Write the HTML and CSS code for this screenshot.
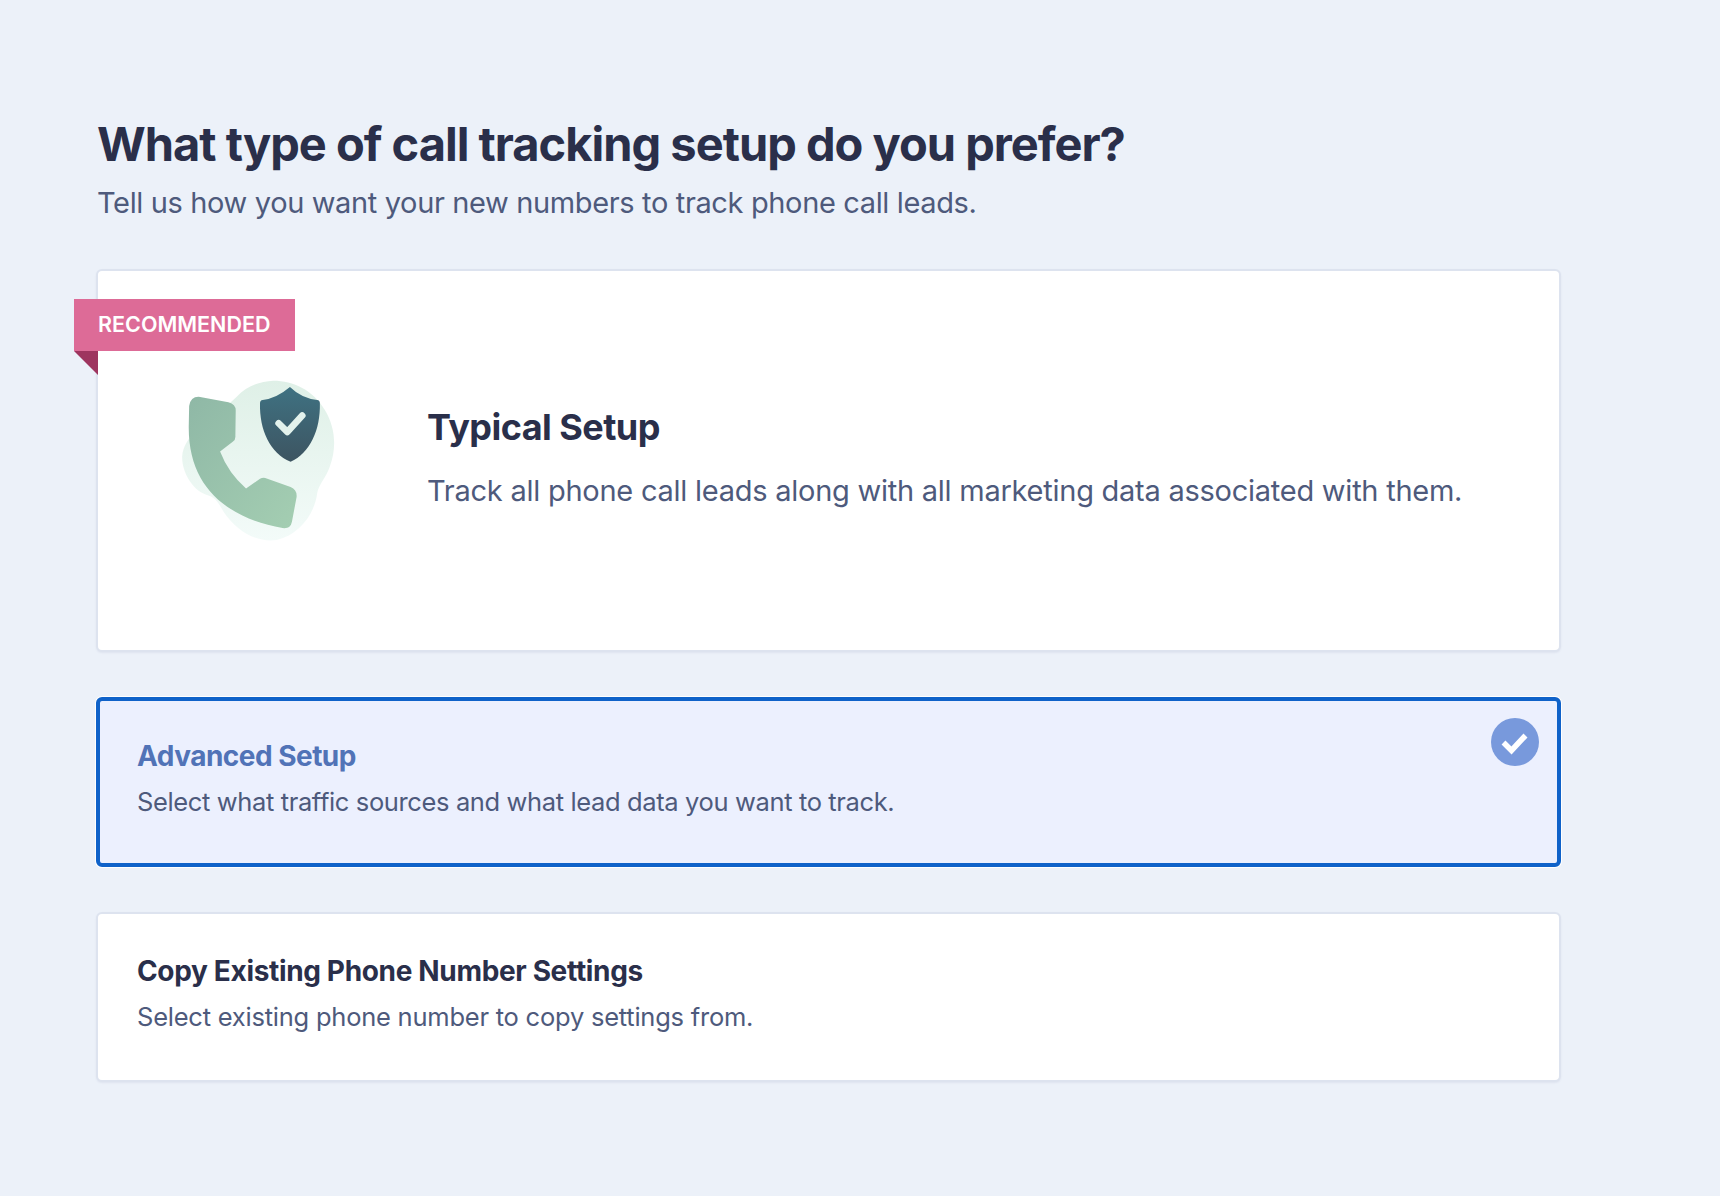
FILE: index.html
```html
<!DOCTYPE html>
<html lang="en">
<head>
<meta charset="utf-8">
<title>Call tracking setup</title>
<link rel="stylesheet" href="styles.css">
</head>
<body>
<main class="page">
  <h1 class="heading">What type of call tracking setup do you prefer?</h1>
  <p class="subheading">Tell us how you want your new numbers to track phone call leads.</p>
  <section class="options">
    <article class="card card-featured">
      <div class="ribbon"><span class="ribbon-label">RECOMMENDED</span></div>
      <svg class="illustration" viewBox="360 360 480 490" aria-hidden="true">
        <defs>
          <linearGradient id="blob" x1="0" y1="0" x2="0" y2="1"><stop offset="0" stop-color="#dff0e7"/><stop offset="1" stop-color="#f3fbf9"/></linearGradient>
          <linearGradient id="phone" x1="0" y1="0" x2="1" y2="1"><stop offset="0" stop-color="#8fb8a6"/><stop offset="1" stop-color="#a4ceb2"/></linearGradient>
          <linearGradient id="shield" x1="0" y1="0" x2="0" y2="1"><stop offset="0" stop-color="#3f7282"/><stop offset="1" stop-color="#3d5461"/></linearGradient>
        </defs>
        <path fill="url(#blob)" d="M640 362C700 362 760 390 795 450C825 500 832 560 810 620C798 655 778 670 772 700C765 760 720 825 650 841C590 850 530 815 490 755C478 735 470 715 445 707C400 695 365 640 366 590C368 560 385 540 400 515C440 470 490 450 530 410C560 378 600 364 640 362Z"/>
        <path fill="url(#phone)" d="M420 411L505 427Q527 432 527 452L526 528Q527 540 518 546L480 575Q505 640 558 686L600 657Q610 652 620 656L692 682Q712 690 710 712L696 786Q692 808 668 805C500 775 380 680 386 490L387 438Q392 408 420 411Z"/>
        <path fill="url(#shield)" d="M690 381Q650 415 608 420Q600 421 600 430C598 510 630 580 692 606C750 580 782 510 780 430Q780 421 772 420Q725 415 690 381Z"/>
        <path fill="none" stroke="#e3f2ec" stroke-width="20" stroke-linecap="round" stroke-linejoin="round" d="M656 490L682 516L727 467"/>
      </svg>
      <div class="featured-text">
        <h2 class="featured-title">Typical Setup</h2>
        <p class="featured-desc">Track all phone call leads along with all marketing data associated with them.</p>
      </div>
    </article>
    <article class="card card-selected">
      <h2 class="card-title card-title-selected">Advanced Setup</h2>
      <p class="card-desc">Select what traffic sources and what lead data you want to track.</p>
      <svg class="check-badge" viewBox="0 0 48 48" aria-hidden="true">
        <circle cx="24" cy="24" r="24" fill="#7899dc"/>
        <path fill="none" stroke="#fff" stroke-width="5.5" d="M12.5 24.5L20.5 32.5L34.5 17.5"/>
      </svg>
    </article>
    <article class="card">
      <h2 class="card-title">Copy Existing Phone Number Settings</h2>
      <p class="card-desc card-desc-loose">Select existing phone number to copy settings from.</p>
    </article>
  </section>
</main>
</body>
</html>
```
FILE: styles.css
```css
* { box-sizing: border-box; }
html, body { margin: 0; padding: 0; }
body {
  background: #ecf1f9;
  font-family: Inter, "Noto Sans", sans-serif;
  height: 1196px;
  overflow: hidden;
}
.page { width: 1561px; padding: 114px 0 0 96px; }
.heading {
  margin: 0 0 0 1px;
  font-size: 47px;
  line-height: 60px;
  font-weight: 700;
  color: #2a2f4a;
  letter-spacing: -1px;
}
.subheading {
  margin: 11px 0 0 1px;
  font-size: 29px;
  line-height: 36px;
  letter-spacing: -0.36px;
  color: #4e5a7c;
}
.options { display: flex; flex-direction: column; gap: 45px; margin-top: 48px; }
.card {
  position: relative;
  height: 170px;
  padding: 39px 38px 0 39px;
  background: #fff;
  border: 2px solid #dde3ef;
  border-radius: 6px;
  box-shadow: 0 1px 2px rgba(60, 80, 130, 0.08);
}
.card-featured {
  height: 383px;
  padding: 0;
  display: flex;
  align-items: center;
}
.ribbon {
  position: absolute;
  left: -24px;
  top: 28px;
  width: 221px;
  height: 52px;
  background: #dd6b97;
  display: flex;
  align-items: center;
  padding: 0 0 2px 24px;
}
.ribbon::after {
  content: "";
  position: absolute;
  left: 0;
  top: 52px;
  border-style: solid;
  border-width: 24px 0 0 24px;
  border-color: #9e355f transparent transparent transparent;
}
.ribbon-label { font-size: 21.5px; font-weight: 600; color: #fff; }
.illustration { width: 160px; height: 163px; margin: 2px 0 0 82px; flex: none; }
.featured-text { margin-left: 87px; padding-bottom: 7px; }
.featured-title {
  margin: 0;
  font-size: 36px;
  line-height: 44px;
  font-weight: 650;
  letter-spacing: -0.55px;
  color: #2a2f4a;
}
.featured-desc {
  margin: 24px 0 0;
  font-size: 29px;
  line-height: 36px;
  letter-spacing: -0.25px;
  color: #4e5a7c;
}
.card-selected {
  background: #ecf0fe;
  border: 4px solid #0f62c9;
  box-shadow: 0 0 0 1px #fff;
  padding: 37px 36px 0 37px;
}
.card-title {
  margin: 0;
  font-size: 28px;
  line-height: 36px;
  font-weight: 650;
  letter-spacing: -0.34px;
  color: #2a2f4a;
}
.card-title-selected { color: #5173b7; letter-spacing: -0.52px; }
.card-desc {
  margin: 10px 0 0;
  font-size: 25.5px;
  line-height: 36px;
  letter-spacing: -0.37px;
  color: #4e5a7c;
}
.card-desc-loose { letter-spacing: -0.23px; }
.check-badge { position: absolute; right: 18px; top: 17px; width: 48px; height: 48px; }
```
